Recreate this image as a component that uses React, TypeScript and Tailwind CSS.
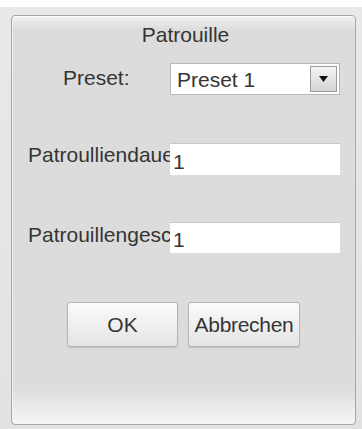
export default function App() {
  return (
    <div className="w-[362px] h-[429px] bg-white pt-[7px] font-['Liberation_Sans',Arial,sans-serif] text-[#353535]">
      <div className="h-[422px] bg-gradient-to-b from-[#e9e9e9] to-[#e2e2e2] pt-[8px] pl-[11px] pr-[6px] pb-[4px]">
        {/* Dialog panel */}
        <div className="h-full rounded-[4px] border border-[#a6a6a6] shadow-[inset_0_1px_0_#ffffff,inset_1px_0_0_#f2f2f2] bg-[linear-gradient(to_bottom,#f1f1f1_0px,#dcdcdc_14px,#dcdcdc_372px,#f6f6f6_408px,#fbfbfb_100%)] pt-[7px] flex flex-col">
          <div className="text-center text-[21px] leading-[24px] pl-[4px]">Patrouille</div>

          {/* Preset */}
          <div className="mt-[16px] flex items-center h-[32px]">
            <div className="ml-[51px] w-[107px] text-[21px] leading-[24px] pb-[3px]">Preset:</div>
            <div className="w-[170px] h-[32px] bg-white border border-[#b8b8b8] flex items-center justify-between">
              <span className="pl-[6px] text-[21px] leading-[24px] pt-[1px]">Preset 1</span>
              <div className="w-[27px] h-[26px] mr-[2px] border border-[#9c9c9c] bg-gradient-to-b from-[#f4f4f4] to-[#d4d4d4] flex items-center justify-center">
                <svg width="9" height="6" viewBox="0 0 9 6">
                  <polygon points="0,0 9,0 4.5,6" fill="#111" />
                </svg>
              </div>
            </div>
          </div>

          {/* Patrouillendauer */}
          <div className="mt-[48px] flex items-start">
            <div className="ml-[16px] w-[142px] overflow-hidden whitespace-nowrap text-[21px] leading-[24px]">Patroulliendauer</div>
            <input
              readOnly
              value="1"
              className="w-[170px] h-[32px] bg-white border-t border-[#c9c9c9] pl-[3px] pt-[4px] pb-0 text-[21px] leading-[24px] text-[#353535] outline-none"
            />
          </div>

          {/* Patrouillengeschwindigkeit */}
          <div className="mt-[47px] flex items-start">
            <div className="ml-[16px] w-[142px] overflow-hidden whitespace-nowrap text-[21px] leading-[24px] pt-[1px]">Patrouillengeschwindigkeit</div>
            <input
              readOnly
              value="1"
              className="w-[170px] h-[31px] bg-white border-t border-[#c9c9c9] pl-[3px] pt-[4px] pb-0 text-[21px] leading-[24px] text-[#353535] outline-none"
            />
          </div>

          {/* Buttons */}
          <div className="mt-[49px] flex justify-center gap-[10px]">
            <button className="w-[111px] h-[45px] rounded-[3px] border border-[#b4b4b4] bg-gradient-to-b from-[#fbfbfb] to-[#e4e4e4] shadow-[0_1px_1px_rgba(0,0,0,0.12)] text-[21px] leading-[24px] text-[#353535]">
              OK
            </button>
            <button className="w-[112px] h-[45px] rounded-[3px] border border-[#b4b4b4] bg-gradient-to-b from-[#fbfbfb] to-[#e4e4e4] shadow-[0_1px_1px_rgba(0,0,0,0.12)] text-[21px] leading-[24px] text-[#353535] tracking-[-0.3px]">
              Abbrechen
            </button>
          </div>
        </div>
      </div>
    </div>
  );
}
